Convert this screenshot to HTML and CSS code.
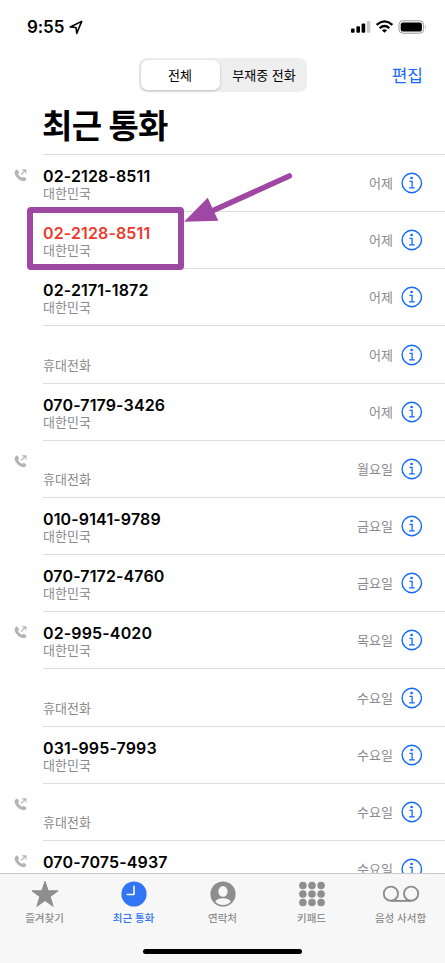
FILE: index.html
```html
<!DOCTYPE html>
<html lang="ko">
<head>
    <meta charset="UTF-8">
    <meta name="viewport" content="width=device-width, initial-scale=1.0">
    <title>최근 통화</title>
    <link rel="stylesheet" href="styles.css">
</head>
<body>

    <!-- Shared icons -->
    <svg class="defs" width="0" height="0">
        <symbol id="info" viewBox="0 0 22 22">
            <circle cx="10.8" cy="11" r="9.7" fill="none" stroke="#146aff" stroke-width="1.4"/>
            <circle cx="10.6" cy="6" r="1.35" fill="#146aff"/>
            <path d="M8.4 9.4H11.1V15.7M8 15.8H13.7" fill="none" stroke="#146aff" stroke-width="1.3"/>
        </symbol>
        <symbol id="outgoing" viewBox="0 0 13 13">
            <path d="M2.1.9C2.7.4 3.3.5 3.7 1.1L4.8 2.8C5.2 3.4 5 3.9 4.5 4.3C4.1 4.6 4 4.9 4.3 5.4C5.1 6.8 6.2 7.9 7.5 8.6C8 8.9 8.3 8.8 8.6 8.4C9 7.9 9.5 7.7 10.1 8.1L11.8 9.3C12.4 9.7 12.5 10.3 12 10.9C11.1 12 9.9 12.4 8.4 12C4.8 11.1 1.4 7.5.6 4.2C.3 2.8.9 1.7 2.1.9Z" fill="#b4b4b6"/>
            <path d="M6.9 5.7L11.7 1M8.2.9H11.9V4.6" fill="none" stroke="#b4b4b6" stroke-width="1.1"/>
        </symbol>
    </svg>

    <div class="phone">
        <div class="status">
            <span class="time">9:55</span>
            <svg class="location" width="14" height="15" viewBox="0 0 14 15">
                <path d="M1.2 7L12.7 1.4L7.8 13.3L7 7.5Z" fill="none" stroke="#000" stroke-width="1.6" stroke-linejoin="round"/>
            </svg>
            <svg class="signals" width="78" height="16" viewBox="0 0 78 16">
                <rect x="1" y="9.5" width="3.6" height="4.2" rx="1"/>
                <rect x="6.4" y="7.3" width="3.6" height="6.4" rx="1"/>
                <rect x="11.6" y="4.6" width="3.6" height="9.1" rx="1"/>
                <rect x="16.8" y="2" width="3.6" height="11.7" rx="1" fill="#c8c8c8"/>
                <path d="M26.6 5.8Q34.5 -1 42.4 5.8M29.7 9.1Q34.5 4.8 39.3 9.1" fill="none" stroke="#000" stroke-width="2.3"/>
                <path d="M34.5 13.7L31.9 11.2Q34.5 9.1 37.1 11.2Z"/>
                <rect x="49" y="1.8" width="24.6" height="12.4" rx="3.8" fill="none" stroke="#999" stroke-width="1"/>
                <rect x="50.7" y="3.4" width="21.2" height="9.2" rx="2.2"/>
                <path d="M75 6Q76.8 8 75 10Z" fill="#999"/>
            </svg>
        </div>

        <div class="toolbar">
            <div class="segment">
                <span class="option selected">전체</span>
                <span class="option">부재중 전화</span>
            </div>
            <span class="edit">편집</span>
        </div>

        <h1>최근 통화</h1>

        <div class="calls">
            <div class="call">
                <svg class="out"><use href="#outgoing"/></svg>
                <div class="line"><div class="who"><b>02-2128-8511</b><span>대한민국</span></div><span class="day">어제</span><svg class="info"><use href="#info"/></svg></div>
            </div>
            <div class="call missed">
                <div class="line"><div class="who"><b>02-2128-8511</b><span>대한민국</span></div><span class="day">어제</span><svg class="info"><use href="#info"/></svg></div>
                <!-- Highlight around the missed call -->
                <svg class="marker" width="268" height="100" viewBox="0 0 268 100">
                    <rect x="4" y="39" width="151" height="57" rx="1" fill="none" stroke="#9f48a3" stroke-width="6" stroke-linejoin="round"/>
                    <path d="M186 40L263.3 5" stroke="#9f48a3" stroke-width="5.6" stroke-linecap="round"/>
                    <path d="M158 50.8L181.7 26.7L192.3 49.8Z" fill="#9f48a3"/>
                </svg>
            </div>
            <div class="call">
                <div class="line"><div class="who"><b>02-2171-1872</b><span>대한민국</span></div><span class="day">어제</span><svg class="info"><use href="#info"/></svg></div>
            </div>
            <div class="call tall">
                <div class="line"><div class="who"><b></b><span>휴대전화</span></div><span class="day">어제</span><svg class="info"><use href="#info"/></svg></div>
            </div>
            <div class="call">
                <div class="line"><div class="who"><b>070-7179-3426</b><span>대한민국</span></div><span class="day">어제</span><svg class="info"><use href="#info"/></svg></div>
            </div>
            <div class="call">
                <svg class="out"><use href="#outgoing"/></svg>
                <div class="line"><div class="who"><b></b><span>휴대전화</span></div><span class="day">월요일</span><svg class="info"><use href="#info"/></svg></div>
            </div>
            <div class="call">
                <div class="line"><div class="who"><b>010-9141-9789</b><span>대한민국</span></div><span class="day">금요일</span><svg class="info"><use href="#info"/></svg></div>
            </div>
            <div class="call">
                <div class="line"><div class="who"><b>070-7172-4760</b><span>대한민국</span></div><span class="day">금요일</span><svg class="info"><use href="#info"/></svg></div>
            </div>
            <div class="call">
                <svg class="out"><use href="#outgoing"/></svg>
                <div class="line"><div class="who"><b>02-995-4020</b><span>대한민국</span></div><span class="day">목요일</span><svg class="info"><use href="#info"/></svg></div>
            </div>
            <div class="call tall">
                <div class="line"><div class="who"><b></b><span>휴대전화</span></div><span class="day">수요일</span><svg class="info"><use href="#info"/></svg></div>
            </div>
            <div class="call">
                <div class="line"><div class="who"><b>031-995-7993</b><span>대한민국</span></div><span class="day">수요일</span><svg class="info"><use href="#info"/></svg></div>
            </div>
            <div class="call">
                <svg class="out"><use href="#outgoing"/></svg>
                <div class="line"><div class="who"><b></b><span>휴대전화</span></div><span class="day">수요일</span><svg class="info"><use href="#info"/></svg></div>
            </div>
            <div class="call">
                <svg class="out"><use href="#outgoing"/></svg>
                <div class="line"><div class="who"><b>070-7075-4937</b></div><span class="day">수요일</span><svg class="info"><use href="#info"/></svg></div>
            </div>
        </div>

        <div class="tabbar">
            <div class="tabs">
                <div class="tab">
                    <svg width="40" height="28" viewBox="0 0 40 28">
                        <path d="M20 1.3L23.2 10.8H33.1L25.2 16.7L28.1 26.3L20 20.6L11.9 26.3L14.8 16.7L6.9 10.8H16.8Z" fill="#8e8e8e" stroke="#8e8e8e" stroke-width="1" stroke-linejoin="round"/>
                    </svg>
                    <span>즐겨찾기</span>
                </div>
                <div class="tab active">
                    <svg width="40" height="28" viewBox="0 0 40 28">
                        <circle cx="20" cy="14" r="12.6" fill="#2f75f6"/>
                        <path d="M20 6.2V14.5H13.2" fill="none" stroke="#fff" stroke-width="1.6" stroke-linecap="round" stroke-linejoin="round"/>
                    </svg>
                    <span>최근 통화</span>
                </div>
                <div class="tab">
                    <svg width="40" height="28" viewBox="0 0 40 28">
                        <circle cx="20" cy="14" r="12.6" fill="#8e8e8e"/>
                        <ellipse cx="20" cy="11.4" rx="4.6" ry="5.3" fill="#f7f7f7"/>
                        <path d="M12.2 21.4C13.6 19.3 16.5 18.3 20 18.3S26.4 19.3 27.8 21.4C26 23.8 23.1 24.9 20 24.9S14 23.8 12.2 21.4Z" fill="#f7f7f7"/>
                    </svg>
                    <span>연락처</span>
                </div>
                <div class="tab">
                    <svg width="40" height="28" viewBox="0 0 40 28" fill="#8e8e8e">
                        <circle cx="10.9" cy="5.5" r="3.8"/><circle cx="20" cy="5.5" r="3.8"/><circle cx="29.1" cy="5.5" r="3.8"/>
                        <circle cx="10.9" cy="14" r="3.8"/><circle cx="20" cy="14" r="3.8"/><circle cx="29.1" cy="14" r="3.8"/>
                        <circle cx="10.9" cy="22.5" r="3.8"/><circle cx="20" cy="22.5" r="3.8"/><circle cx="29.1" cy="22.5" r="3.8"/>
                    </svg>
                    <span>키패드</span>
                </div>
                <div class="tab">
                    <svg width="40" height="28" viewBox="0 0 40 28" fill="none" stroke="#8e8e8e" stroke-width="1.9">
                        <circle cx="9.9" cy="13.7" r="7.1"/>
                        <circle cx="30.1" cy="13.7" r="7.1"/>
                        <path d="M9.9 20.9H30.1"/>
                    </svg>
                    <span>음성 사서함</span>
                </div>
            </div>
            <div class="home"></div>
        </div>
    </div>

</body>
</html>
```
FILE: styles.css
```css
body {
    margin: 0;
    background: #fff;
    color: #000;
    font-family: Inter, "Noto Sans CJK KR", sans-serif;
    overflow: hidden;
}

.defs {
    display: block;
}

.phone {
    display: flex;
    flex-direction: column;
    width: 445px;
    height: 963px;
    overflow: hidden;
}

/* Status bar */
.status {
    display: flex;
    align-items: center;
    height: 54px;
    padding: 0 17px 0 27px;
    box-sizing: border-box;
}

.time {
    font-size: 17px;
    font-weight: 600;
    letter-spacing: -0.1px;
}

.location {
    margin-left: 5px;
}

.signals {
    margin-left: auto;
}

/* Segmented control */
.toolbar {
    display: grid;
    grid-template-columns: 1fr 168px 1fr;
    align-items: center;
    height: 42px;
}

.segment {
    grid-column: 2;
    display: flex;
    height: 34px;
    padding: 2px;
    box-sizing: border-box;
    border-radius: 8px;
    background: #eee;
}

.option {
    flex: 1;
    padding-left: 4px;
    font-size: 13px;
    line-height: 30px;
    text-align: center;
    white-space: nowrap;
}

.selected {
    flex: 0 0 79px;
    padding-left: 0;
    border-radius: 7px;
    background: #fff;
    box-shadow: 0 1px 3px rgba(0, 0, 0, 0.2);
}

.edit {
    justify-self: end;
    margin: 0 22px 2px 0;
    color: #146aff;
    font-size: 17px;
}

h1 {
    height: 58px;
    margin: 0 0 0 42px;
    font-size: 33px;
    font-weight: 700;
    line-height: 60px;
    letter-spacing: -0.7px;
}

/* Call list */
.calls {
    flex: 1;
    min-height: 0;
    overflow: hidden;
}

.call {
    display: flex;
    position: relative;
    height: 57px;
    padding-left: 43px;
}

.tall {
    height: 58px;
}

.out {
    width: 13px;
    height: 13px;
    margin: 15px 16px 0 -29px;
}

.line {
    flex: 1;
    display: flex;
    align-items: center;
    padding-right: 22px;
    border-top: 1px solid #dcdcde;
}

.who {
    flex: 1;
    align-self: flex-start;
    padding-top: 12px;
}

.who b {
    display: block;
    height: 18px;
    font-size: 16px;
    font-weight: 600;
    letter-spacing: 0.13px;
    line-height: 19px;
}

.tall .who b {
    height: 19px;
}

.who span {
    display: block;
    color: #8a8a8d;
    font-size: 13px;
    line-height: 17px;
}

.missed b {
    color: #eb3a2c;
}

.day {
    margin: 0 8px 1px 0;
    color: #8a8a8d;
    font-size: 13px;
}

.info {
    width: 22px;
    height: 22px;
}

.marker {
    position: absolute;
    top: -40px;
    left: 26px;
    z-index: 1;
}

/* Bottom tabs */
.tabbar {
    height: 90px;
    box-sizing: border-box;
    border-top: 1px solid #c9c9cb;
    background: #f7f7f7;
}

.tabs {
    display: grid;
    grid-template-columns: repeat(5, 1fr);
    padding-top: 6px;
}

.tab {
    display: flex;
    flex-direction: column;
    align-items: center;
    color: #8e8e8e;
    font-size: 10.5px;
    font-weight: 500;
    line-height: 21px;
}

.active {
    color: #2f75f6;
}

.home {
    width: 159px;
    height: 5px;
    margin: 20px auto 0;
    border-radius: 3px;
    background: #000;
}
```
